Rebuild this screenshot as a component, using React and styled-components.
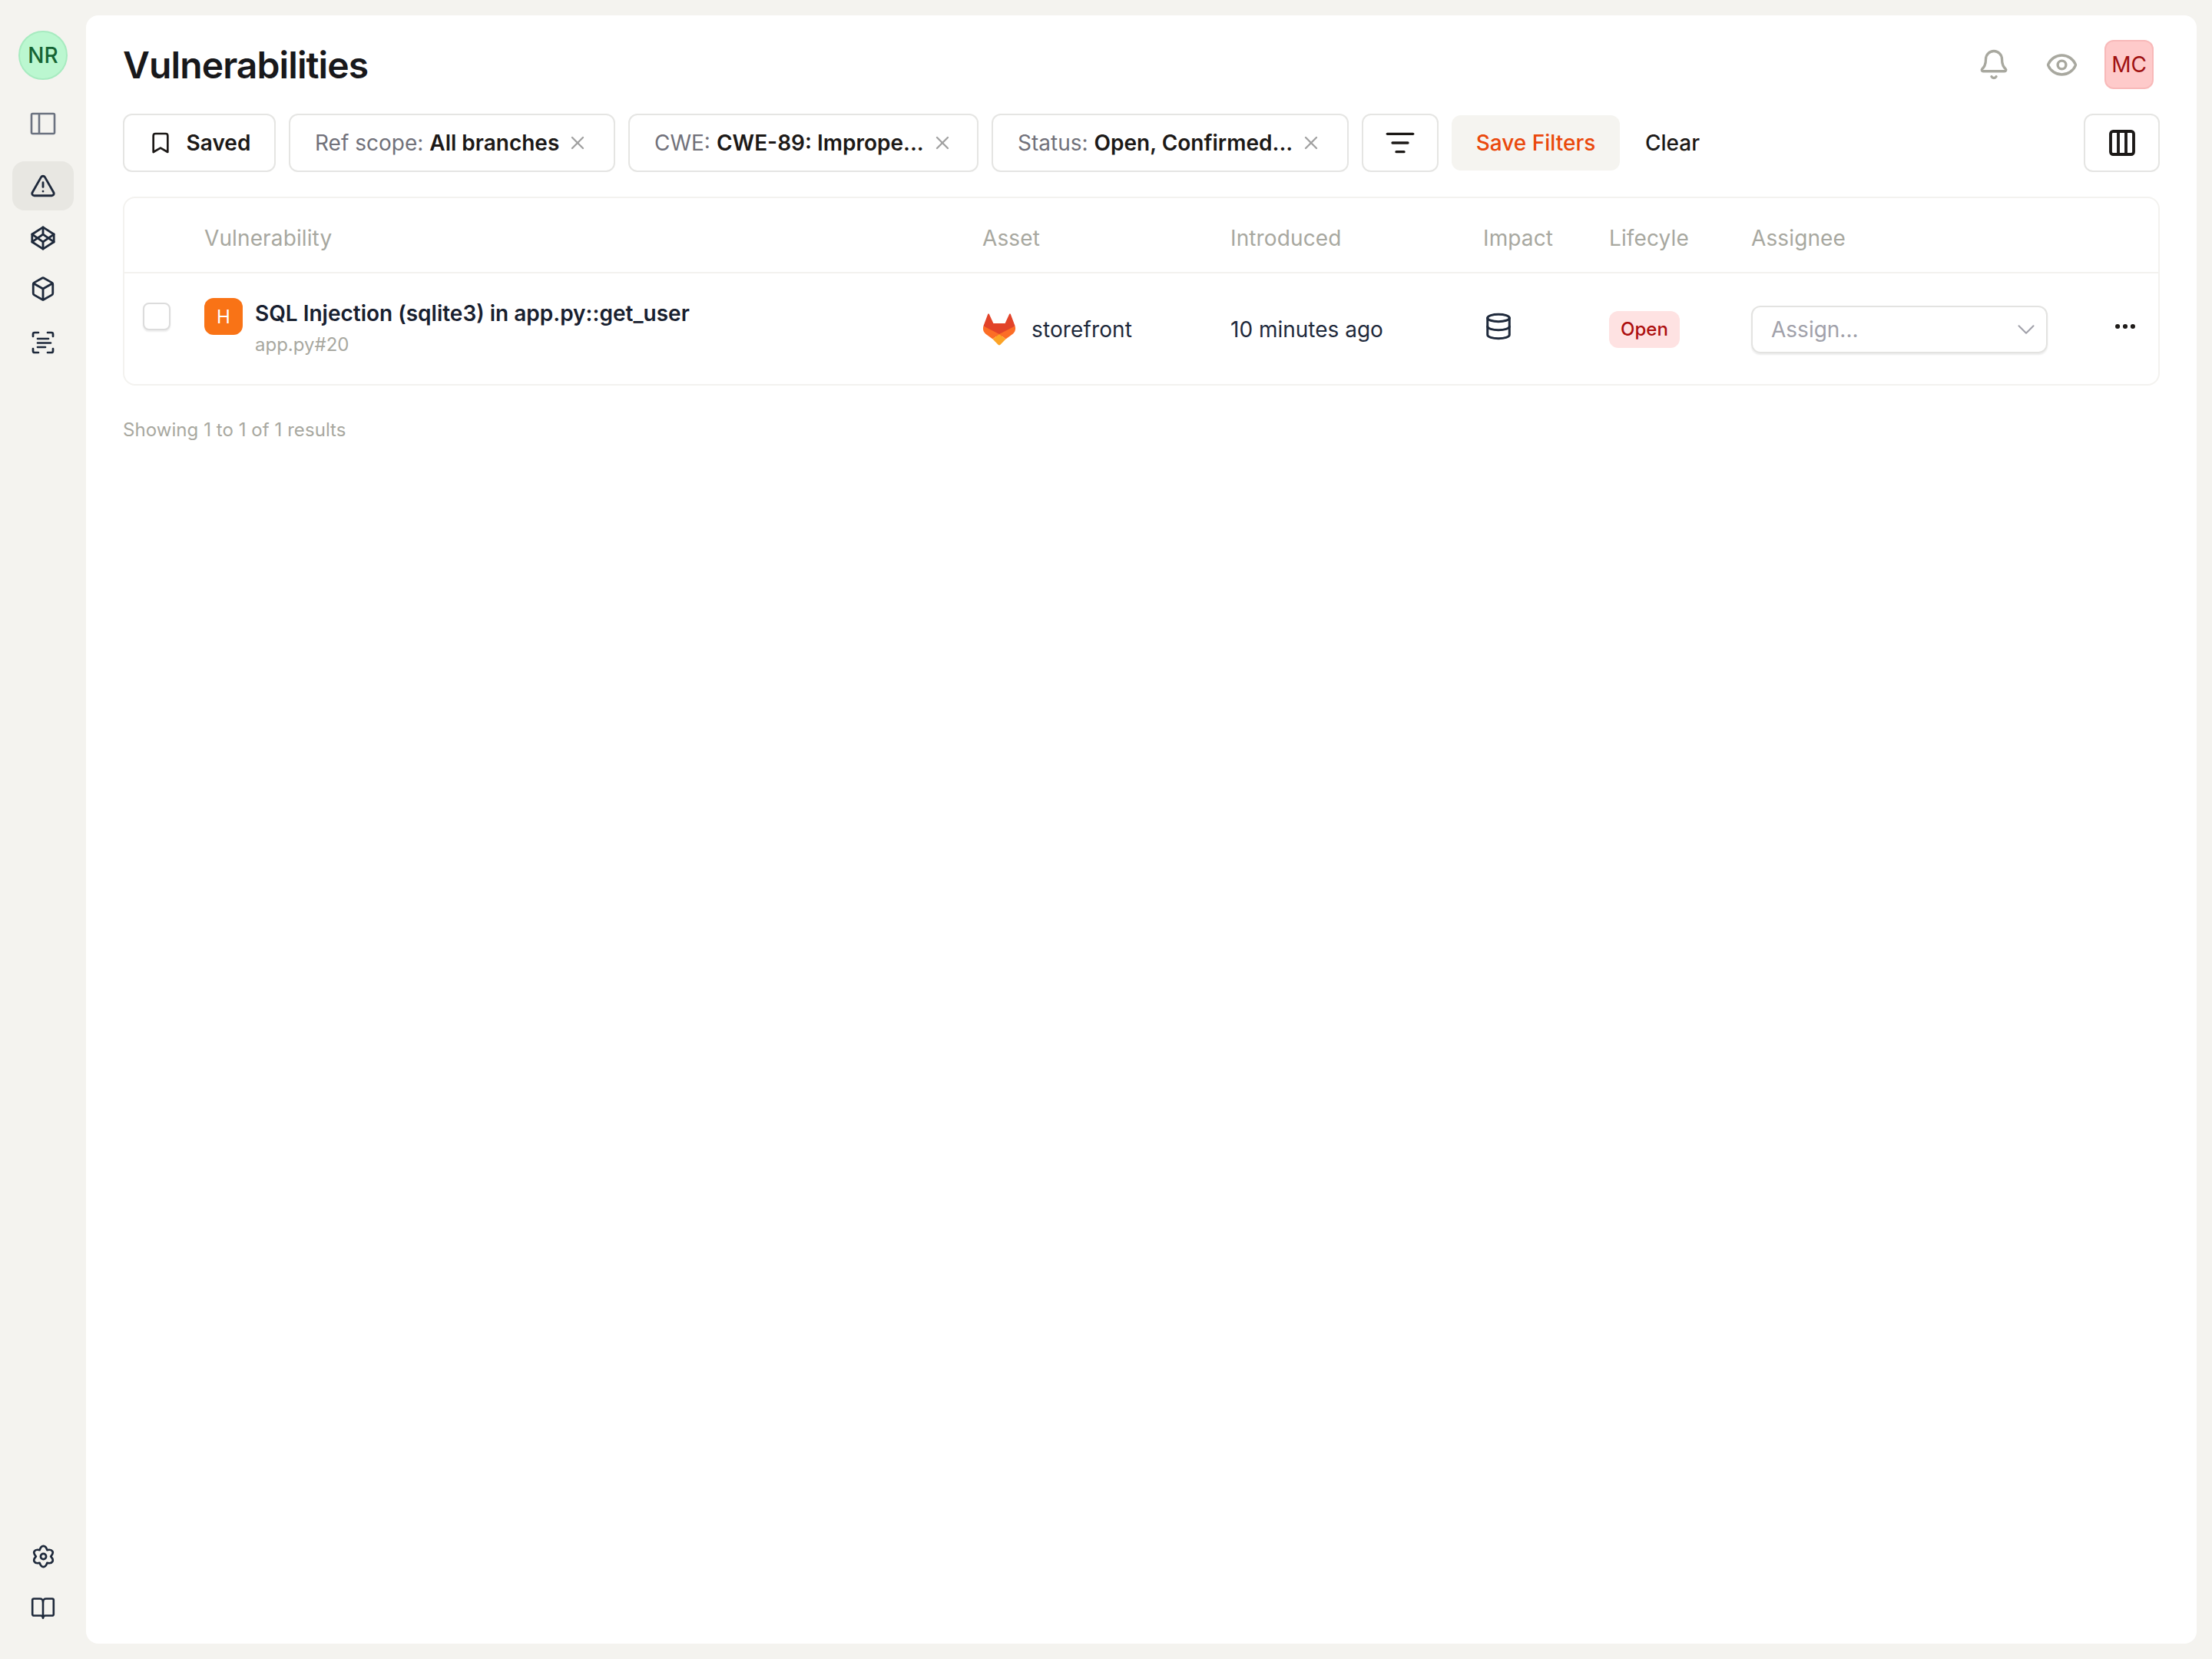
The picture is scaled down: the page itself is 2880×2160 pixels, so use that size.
import React from 'react';
import styled, { createGlobalStyle } from 'styled-components';
import {
  Bell, Bookmark, Box, ChevronDown, Codepen, Columns3, Database, Ellipsis, Eye,
  ListFilter, TriangleAlert, X,
} from 'lucide-react';

const Global = createGlobalStyle`
  html, body { margin: 0; padding: 0; background: #f4f3ef; }
  body { font-family: Inter, "Liberation Sans", sans-serif; color: #1c1917; }
  * { box-sizing: border-box; }
`;

const Shell = styled.div`
  display: grid;
  grid-template-columns: 112px 1fr;
  width: 2880px;
  height: 2160px;
  background: #f4f3ef;
`;

const Sidebar = styled.nav`
  display: flex;
  flex-direction: column;
  align-items: center;
  padding: 40px 0 34px;
`;

const OrgAvatar = styled.div`
  width: 64px;
  height: 64px;
  border-radius: 50%;
  background: #bbf7d0;
  border: 2px solid #a7ebc0;
  color: #166534;
  display: flex;
  align-items: center;
  justify-content: center;
  font-size: 28px;
  font-weight: 500;
`;

const NavIcon = styled.div`
  width: 80px;
  height: ${p => p.$h || 64}px;
  margin-top: ${p => p.$mt || 0}px;
  border-radius: 16px;
  background: ${p => (p.$active ? '#e8e7e2' : 'transparent')};
  color: ${p => p.$color || '#1e293b'};
  display: flex;
  align-items: center;
  justify-content: center;
`;

const Spacer = styled.div`
  flex: 1;
`;

const Panel = styled.main`
  margin: 20px 20px 20px 0;
  background: #fff;
  border-radius: 16px;
  padding: 32px 48px;
`;

const Header = styled.header`
  display: flex;
  align-items: center;
  height: 64px;
  padding-right: 8px;
`;

const Title = styled.h1`
  margin: 0;
  flex: 1;
  padding-top: 2px;
  font-size: 48px;
  line-height: 64px;
  font-weight: 600;
  color: #18181b;
  letter-spacing: -0.9px;
`;

const HeaderIcon = styled.div`
  width: 44px;
  height: 44px;
  margin-right: ${p => p.$mr}px;
  color: #a8a89f;
  display: flex;
  align-items: center;
  justify-content: center;
`;

const UserAvatar = styled.div`
  width: 64px;
  height: 64px;
  border-radius: 12px;
  background: #fecaca;
  border: 2px solid #f8b9b9;
  color: #9f1111;
  display: flex;
  align-items: center;
  justify-content: center;
  font-size: 28px;
`;

const Filters = styled.div`
  display: flex;
  align-items: center;
  gap: 17px;
  margin-top: 32px;
  height: 76px;
`;

const OutlineButton = styled.button`
  height: 76px;
  width: ${p => p.$w}px;
  flex: none;
  background: #fff;
  border: 2px solid #e5e5e3;
  border-radius: 12px;
  padding: 0;
  font: 600 28px Inter, sans-serif;
  color: #1c1917;
  display: flex;
  align-items: center;
  justify-content: center;
  gap: ${p => p.$gap || 0}px;
`;

const Chip = styled.div`
  height: 76px;
  width: ${p => p.$w}px;
  flex: none;
  border: 2px solid #e5e5e3;
  border-radius: 12px;
  padding-left: 32px;
  display: flex;
  align-items: center;
  font-size: 28px;
  white-space: nowrap;
`;

const ChipLabel = styled.span`
  color: #71717a;
  margin-right: 8px;
`;

const ChipValue = styled.span`
  color: #1c1917;
  font-weight: 600;
`;

const ChipClose = styled.span`
  color: #a1a1a1;
  margin-left: 10px;
  display: flex;
`;

const SaveButton = styled.button`
  height: 72px;
  width: 219px;
  flex: none;
  background: #f5f4f0;
  border: 0;
  border-radius: 12px;
  font: 500 28px Inter, sans-serif;
  color: #ea480c;
`;

const ClearButton = styled.button`
  background: none;
  border: 0;
  padding: 0 0 0 16px;
  font: 500 28px Inter, sans-serif;
  color: #1c1917;
`;

const Grow = styled.div`
  flex: 1;
`;

const Card = styled.section`
  margin-top: 32px;
  border: 2px solid #f3f2ef;
  border-radius: 16px;
`;

const COLUMNS = '104px 1013px 323px 329px 164px 185px 1fr';

const HeadRow = styled.div`
  display: grid;
  grid-template-columns: ${COLUMNS};
  align-items: center;
  height: 98px;
  padding-top: 8px;
  border-bottom: 2px solid #f3f2ef;
  font-size: 28px;
  letter-spacing: 0.12px;
  color: #a8a8a0;
`;

const BodyRow = styled.div`
  display: grid;
  grid-template-columns: ${COLUMNS};
  align-items: center;
  height: 144px;
  padding-top: 1px;
  font-size: 28px;
  color: #1e293b;
`;

const CheckCell = styled.div`
  align-self: start;
  padding: 37px 0 0 24px;
`;

const CheckBox = styled.div`
  width: 36px;
  height: 36px;
  border: 2px solid #dcdcdc;
  border-radius: 8px;
  background: #fff;
  box-shadow: 0 2px 2px rgba(0, 0, 0, 0.08);
`;

const VulnCell = styled.div`
  align-self: start;
  display: flex;
  gap: 16px;
  padding-top: 31px;
`;

const Severity = styled.div`
  width: 50px;
  height: 48px;
  border-radius: 12px;
  background: #f97316;
  color: #fff;
  font-size: 24px;
  display: flex;
  align-items: center;
  justify-content: center;
`;

const VulnName = styled.div`
  font-weight: 600;
  line-height: 40px;
  color: #18202f;
`;

const VulnPath = styled.div`
  font-size: 24px;
  line-height: 32px;
  margin-top: 5px;
  color: #a8a8a0;
`;

const AssetCell = styled.div`
  display: flex;
  align-items: center;
  gap: 20px;
  letter-spacing: 0.12px;
`;

const ImpactCell = styled.div`
  display: flex;
  padding: 0 0 8px 1px;
`;

const Lifecycle = styled.span`
  display: inline-flex;
  align-items: center;
  justify-content: center;
  width: 92px;
  height: 48px;
  border-radius: 12px;
  background: #fee2e2;
  color: #ad0f0f;
  font-size: 24px;
  font-weight: 500;
`;

const AssigneeCell = styled.div`
  display: flex;
  align-items: center;
`;

const Select = styled.div`
  width: 386px;
  height: 62px;
  border: 2px solid #e3e3e1;
  border-radius: 12px;
  box-shadow: 0 2px 2px rgba(0, 0, 0, 0.08);
  padding: 0 7px 0 24px;
  display: flex;
  align-items: center;
  justify-content: space-between;
  color: #a1a1aa;
`;

const RowMenu = styled.div`
  margin: 0 0 8px 84px;
  display: flex;
  color: #1c1917;
`;

const Footnote = styled.p`
  margin: 42px 0 0;
  font-size: 24px;
  line-height: 32px;
  letter-spacing: 0.06px;
  color: #a8a8a0;
`;

const PanelToggle = () => (
  <svg width="34" height="30" viewBox="0 0 34 30" fill="none" stroke="currentColor" strokeWidth="2.6">
    <rect x="2" y="2" width="30" height="26" rx="1.5" />
    <path d="M12 2v26" />
  </svg>
);

const ScanIcon = () => (
  <svg width="40" height="40" viewBox="0 0 40 40" fill="none" stroke="currentColor" strokeWidth="2.7" strokeLinecap="round" strokeLinejoin="round">
    <path d="M14 7H9a2 2 0 0 0-2 2v3" />
    <path d="M26 7h5a2 2 0 0 1 2 2v3" />
    <path d="M14 33H9a2 2 0 0 1-2-2v-3" />
    <path d="M26 33h5a2 2 0 0 0 2-2v-3" />
    <path d="M13 15h14M13 20.5h17M13 26h10" />
  </svg>
);

const polar = (r, deg) => {
  const a = (deg * Math.PI) / 180;
  return `${(20 + r * Math.cos(a)).toFixed(2)} ${(20 + r * Math.sin(a)).toFixed(2)}`;
};

const gearOutline = [-90, -30, 30, 90, 150, 210].reduce(
  (d, peak) =>
    `${d} C${polar(16.8, peak - 10)} ${polar(16.8, peak + 10)} ${polar(10.5, peak + 30)}`,
  `M${polar(10.5, -120)}`,
);

const GearIcon = () => (
  <svg width="37" height="37" viewBox="0 0 40 40" fill="none" stroke="currentColor" strokeWidth="2.9" strokeLinejoin="round">
    <path d={`${gearOutline} Z`} />
    <circle cx="20" cy="20" r="3.9" />
  </svg>
);

const BookIcon = () => (
  <svg width="32" height="30" viewBox="0 0 32 30" fill="none" stroke="currentColor" strokeWidth="2.6" strokeLinecap="round" strokeLinejoin="round">
    <path d="M16 6.5C16 4 14.5 2.5 12 2.5H4a1.8 1.8 0 0 0-1.8 1.8v18.4A1.8 1.8 0 0 0 4 24.5h9c2 0 3 1 3 3V6.5Z" />
    <path d="M16 6.5C16 4 17.5 2.5 20 2.5h8a1.8 1.8 0 0 1 1.8 1.8v18.4a1.8 1.8 0 0 1-1.8 1.8h-9c-2 0-3 1-3 3" />
  </svg>
);

const GitLabLogo = () => (
  <svg width="44" height="42" viewBox="0 0 44 42" style={{ flex: 'none' }}>
    <path d="M7.2 1 Q8 -.4 8.9 1 L14.4 13 H29.6 L35.1 1 Q36 -.4 36.8 1 L42.6 16.5 L22 33 L1.4 16.5 Z" fill="#e24329" />
    <path d="M1.4 16.5 C.2 20.5 1.4 24.5 4.6 27 L13.5 33.6 L22 27 Z" fill="#fc6d26" />
    <path d="M42.6 16.5 C43.8 20.5 42.6 24.5 39.4 27 L30.5 33.6 L22 27 Z" fill="#fc6d26" />
    <path d="M13.5 33.6 L22 27 L30.5 33.6 L23.2 41 Q22 41.8 20.8 41 Z" fill="#fca326" />
  </svg>
);

const columns = ['', 'Vulnerability', 'Asset', 'Introduced', 'Impact', 'Lifecyle', 'Assignee'];

export default function App() {
  return (
    <Shell>
      <Global />
      <Sidebar>
        <OrgAvatar>NR</OrgAvatar>
        <NavIcon $mt={21} $h={72} $color="#6b7280"><PanelToggle /></NavIcon>
        <NavIcon $mt={13} $active><TriangleAlert size={34} strokeWidth={2} /></NavIcon>
        <NavIcon $mt={4}><Codepen size={34} strokeWidth={2} /></NavIcon>
        <NavIcon $mt={2}><Box size={34} strokeWidth={2} /></NavIcon>
        <NavIcon $mt={2} $h={72}><ScanIcon /></NavIcon>
        <Spacer />
        <NavIcon><GearIcon /></NavIcon>
        <NavIcon $mt={4}><BookIcon /></NavIcon>
      </Sidebar>
      <Panel>
        <Header>
          <Title>Vulnerabilities</Title>
          <HeaderIcon $mr={44}><Bell size={42} strokeWidth={1.9} /></HeaderIcon>
          <HeaderIcon $mr={34}><Eye size={43} strokeWidth={1.9} /></HeaderIcon>
          <UserAvatar>MC</UserAvatar>
        </Header>
        <Filters>
          <OutlineButton $w={199} $gap={18}><Bookmark size={32} strokeWidth={2} />Saved</OutlineButton>
          <Chip $w={425}>
            <ChipLabel>Ref scope:</ChipLabel><ChipValue>All branches</ChipValue>
            <ChipClose><X size={28} strokeWidth={2} /></ChipClose>
          </Chip>
          <Chip $w={456}>
            <ChipLabel>CWE:</ChipLabel><ChipValue>CWE-89: Imprope...</ChipValue>
            <ChipClose><X size={28} strokeWidth={2} /></ChipClose>
          </Chip>
          <Chip $w={465}>
            <ChipLabel>Status:</ChipLabel><ChipValue>Open, Confirmed...</ChipValue>
            <ChipClose><X size={28} strokeWidth={2} /></ChipClose>
          </Chip>
          <OutlineButton $w={100}><ListFilter size={40} strokeWidth={2} /></OutlineButton>
          <SaveButton>Save Filters</SaveButton>
          <ClearButton>Clear</ClearButton>
          <Grow />
          <OutlineButton $w={99}><Columns3 size={40} strokeWidth={2.3} /></OutlineButton>
        </Filters>
        <Card>
          <HeadRow>
            {columns.map(c => <div key={c}>{c}</div>)}
          </HeadRow>
          <BodyRow>
            <CheckCell><CheckBox /></CheckCell>
            <VulnCell>
              <Severity>H</Severity>
              <div>
                <VulnName>SQL Injection (sqlite3) in app.py::get_user</VulnName>
                <VulnPath>app.py#20</VulnPath>
              </div>
            </VulnCell>
            <AssetCell><GitLabLogo />storefront</AssetCell>
            <div>10 minutes ago</div>
            <ImpactCell><Database size={38} strokeWidth={1.9} /></ImpactCell>
            <div><Lifecycle>Open</Lifecycle></div>
            <AssigneeCell>
              <Select>Assign...<ChevronDown size={38} strokeWidth={1.3} /></Select>
              <RowMenu><Ellipsis size={34} strokeWidth={2.3} /></RowMenu>
            </AssigneeCell>
          </BodyRow>
        </Card>
        <Footnote>Showing 1 to 1 of 1 results</Footnote>
      </Panel>
    </Shell>
  );
}
